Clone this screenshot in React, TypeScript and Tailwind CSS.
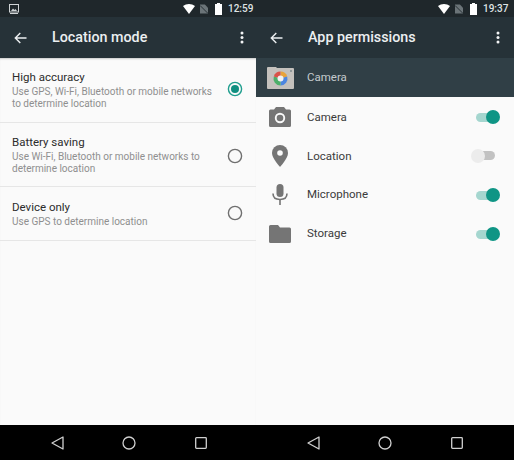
const font = { fontFamily: '"Roboto", "Liberation Sans", sans-serif' };

function StatusIcons({ time }: { time: string }) {
  return (
    <div className="flex items-center">
      <svg width="12" height="10" viewBox="0 0 14 11" preserveAspectRatio="none" className="mr-[5px]">
        <path d="M0 2.2C2 .8 4.4 0 7 0s5 .8 7 2.2L7 11z" fill="#ffffff" />
      </svg>
      <svg width="8" height="10" viewBox="0 0 9 10" className="mr-[7px]">
        <path d="M0 10V0h5.500L9 3.500V10z" fill="#6b7478" />
        <path d="M0 1l9 9" stroke="#20292d" strokeWidth="1" />
      </svg>
      <svg width="7" height="12" viewBox="0 0 7 12" className="mr-[6px]">
        <path d="M2 0h3v1h2v11H0V1h2z" fill="#ffffff" />
      </svg>
      <span className="text-[10px] font-medium leading-none text-[#dfe3e4] w-[25px]">{time}</span>
    </div>
  );
}

function Toolbar({ title, dots }: { title: string; dots: string }) {
  return (
    <div className="h-[41px] bg-[#263238] flex items-center shrink-0">
      <svg width="13" height="12" viewBox="0 0 13 12" className="ml-[14px] shrink-0">
        <path d="M12.500 6H1.500M6.300 1 1.300 6l5 5" stroke="#eceff1" strokeWidth="1.400" fill="none" />
      </svg>
      <span className="ml-[25px] text-[14.300px] font-medium text-[#eceff1] leading-none">{title}</span>
      <svg width="4" height="13" viewBox="0 0 4 13" className={`ml-auto ${dots}`}>
        <circle cx="2" cy="2" r="1.500" fill="#f2f4f5" />
        <circle cx="2" cy="6.500" r="1.500" fill="#f2f4f5" />
        <circle cx="2" cy="11" r="1.500" fill="#f2f4f5" />
      </svg>
    </div>
  );
}

function LocationRow({ title, lines, selected, h, radio, pad }: { title: string; lines: string[]; selected?: boolean; h: string; radio: string; pad: string }) {
  return (
    <div className={`${h} border-b border-[#e6e6e6] flex items-start pl-[12px] pr-[13px] shrink-0`}>
      <div className={`flex-1 ${pad}`}>
        <div className="text-[11.500px] leading-[15px] mb-[1px] text-[#2c2c2c]">{title}</div>
        {lines.map((l) => (
          <div key={l} className="text-[10px] leading-[12px] text-[#8f8f8f] whitespace-nowrap">{l}</div>
        ))}
      </div>
      <svg width="16" height="16" viewBox="0 0 16 16" className={`${radio} shrink-0`}>
        <circle cx="8" cy="8" r="6.600" fill="none" stroke={selected ? "#1f9e8e" : "#6f6f6f"} strokeWidth="1.400" />
        {selected && <circle cx="8" cy="8" r="4" fill="#0f8f80" />}
      </svg>
    </div>
  );
}

function Toggle({ on }: { on: boolean }) {
  return on ? (
    <div className="flex items-center relative w-[24px] h-[14px] ml-auto mr-[14px]">
      <div className="absolute left-0 top-[3px] w-[20px] h-[9px] rounded-full bg-[#a5d6cf]" />
      <div className="absolute right-0 top-0 w-[14px] h-[14px] rounded-full bg-[#0f9585]" />
    </div>
  ) : (
    <div className="flex items-center relative w-[24px] h-[14px] ml-auto mr-[19px]">
      <div className="absolute right-0 top-[2px] w-[18px] h-[9px] rounded-full bg-[#c2c2c2]" />
      <div className="absolute left-0 top-0 w-[14px] h-[14px] rounded-full bg-[#ececec]" />
    </div>
  );
}

function CameraIcon() {
  return (
    <svg width="22" height="20" viewBox="0 0 22 20">
      <path d="M7 0h8l2 2.500h3.500A1.500 1.500 0 0 1 22 4v14.500a1.500 1.500 0 0 1-1.500 1.500h-19A1.500 1.500 0 0 1 0 18.500V4a1.500 1.500 0 0 1 1.500-1.500H5z" fill="#757575" />
      <circle cx="11" cy="11" r="5.200" fill="#fafafa" />
      <circle cx="11" cy="11" r="3.300" fill="#757575" />
    </svg>
  );
}
function PinIcon() {
  return (
    <svg width="16" height="22" viewBox="0 0 16 22">
      <path d="M8 0a8 8 0 0 0-8 8c0 5.500 8 14 8 14s8-8.500 8-14a8 8 0 0 0-8-8z" fill="#757575" />
      <circle cx="8" cy="8" r="2.800" fill="#fafafa" />
    </svg>
  );
}
function MicIcon() {
  return (
    <svg width="16" height="21" viewBox="0 0 16 21">
      <rect x="4.500" y="0" width="7" height="13" rx="3.500" fill="#757575" />
      <path d="M1 9.500c0 4 3 6 7 6s7-2 7-6" fill="none" stroke="#757575" strokeWidth="1.600" />
      <rect x="7.200" y="15" width="1.600" height="6" fill="#757575" />
    </svg>
  );
}
function FolderIcon() {
  return (
    <svg width="22" height="18" viewBox="0 0 22 18">
      <path d="M1.500 0H9l2 2.500h9.500A1.500 1.500 0 0 1 22 4v12.500a1.500 1.500 0 0 1-1.500 1.500h-19A1.500 1.500 0 0 1 0 16.500v-15A1.500 1.500 0 0 1 1.500 0z" fill="#757575" />
    </svg>
  );
}

function PermRow({ icon, label, on }: { icon: React.ReactNode; label: string; on: boolean }) {
  return (
    <div className="h-[38.800px] flex items-center shrink-0">
      <div className="w-[51px] flex justify-center pl-[1px] pr-[5px]">{icon}</div>
      <span className="text-[11.500px] text-[#3a3a3a]">{label}</span>
      <Toggle on={on} />
    </div>
  );
}

function NavBar() {
  return (
    <div className="h-[35px] bg-black flex items-center shrink-0">
      <div className="w-[156px] ml-[51px] flex items-center justify-between">
        <svg width="13" height="14" viewBox="0 0 13 14">
          <path d="M12 1v12L1 7z" fill="none" stroke="#d0d0d0" strokeWidth="1.300" strokeLinejoin="round" />
        </svg>
        <svg width="14" height="14" viewBox="0 0 14 14" className="mr-[1px]">
          <circle cx="7" cy="7" r="6" fill="none" stroke="#d0d0d0" strokeWidth="1.300" />
        </svg>
        <svg width="12" height="12" viewBox="0 0 12 12">
          <rect x="0.700" y="0.700" width="10.600" height="10.600" rx="0.800" fill="none" stroke="#d0d0d0" strokeWidth="1.300" />
        </svg>
      </div>
    </div>
  );
}

export default function App() {
  return (
    <div className="w-[514px] h-[460px] flex overflow-hidden bg-[#fafafa]" style={font}>
      <div className="w-[256px] h-full flex flex-col shrink-0">
        <div className="h-[17px] bg-[#1f272b] flex items-center justify-between pl-[9px] pr-[3px] shrink-0">
          <svg width="10" height="10" viewBox="0 0 10 10">
            <rect x="0.500" y="0.500" width="9" height="7.500" fill="none" stroke="#cfd3d5" />
            <rect x="1" y="9" width="8" height="1" fill="#cfd3d5" />
            <path d="M2 7l2-2.500 1.500 1.500 1-1L8 7z" fill="#cfd3d5" />
          </svg>
          <StatusIcons time="12:59" />
        </div>
        <Toolbar title="Location mode" dots="mr-[12px]" />
        <div className="flex-1 flex flex-col shadow-[inset_0_2px_2px_-1px_rgba(0,0,0,0.2)]">
          <LocationRow title="High accuracy" h="h-[65px]" pad="pt-[12px]" radio="mt-[23px]" selected lines={["Use GPS, Wi-Fi, Bluetooth or mobile networks", "to determine location"]} />
          <LocationRow title="Battery saving" h="h-[64px]" pad="pt-[12px]" radio="mt-[25px]" lines={["Use Wi-Fi, Bluetooth or mobile networks to", "determine location"]} />
          <LocationRow title="Device only" h="h-[54px]" pad="pt-[13px]" radio="mt-[18px]" lines={["Use GPS to determine location"]} />
        </div>
        <NavBar />
      </div>
      <div className="w-[258px] h-full flex flex-col shrink-0">
        <div className="h-[17px] bg-[#1f272b] flex items-center justify-end pr-[6px] shrink-0">
          <StatusIcons time="19:37" />
        </div>
        <Toolbar title="App permissions" dots="mr-[14px]" />
        <div className="h-[39px] bg-[#303f46] flex items-center shrink-0">
          <svg width="27" height="23" viewBox="0 0 27 23" className="ml-[11px] mr-[13px] shrink-0">
            <path d="M1 1h8l1 1h16a1 1 0 0 1 1 1v19a1 1 0 0 1-1 1H1a1 1 0 0 1-1-1V2a1 1 0 0 1 1-1z" fill="#c4c1bd" />
            <circle cx="24" cy="5" r="1" fill="#7f8a8e" />
            <path d="M13.500 5.500a7 7 0 0 1 6.700 5L13.500 12.500z" fill="#e8a33b" />
            <path d="M20.200 10.500a7 7 0 0 1-6.700 9v-7z" fill="#4c86e0" />
            <path d="M13.500 19.500a7 7 0 0 1-6.700-9l6.700 2z" fill="#4caf6a" />
            <path d="M6.800 10.500a7 7 0 0 1 6.700-5v7z" fill="#d9534a" />
            <circle cx="13.500" cy="12.500" r="3" fill="#f2f2f2" />
          </svg>
          <span className="text-[11.500px] text-[#c3cacd]">Camera</span>
        </div>
        <div className="flex-1 flex flex-col pt-[1px]">
          <PermRow icon={<CameraIcon />} label="Camera" on />
          <PermRow icon={<PinIcon />} label="Location" on={false} />
          <PermRow icon={<MicIcon />} label="Microphone" on />
          <PermRow icon={<FolderIcon />} label="Storage" on />
        </div>
        <NavBar />
      </div>
    </div>
  );
}
